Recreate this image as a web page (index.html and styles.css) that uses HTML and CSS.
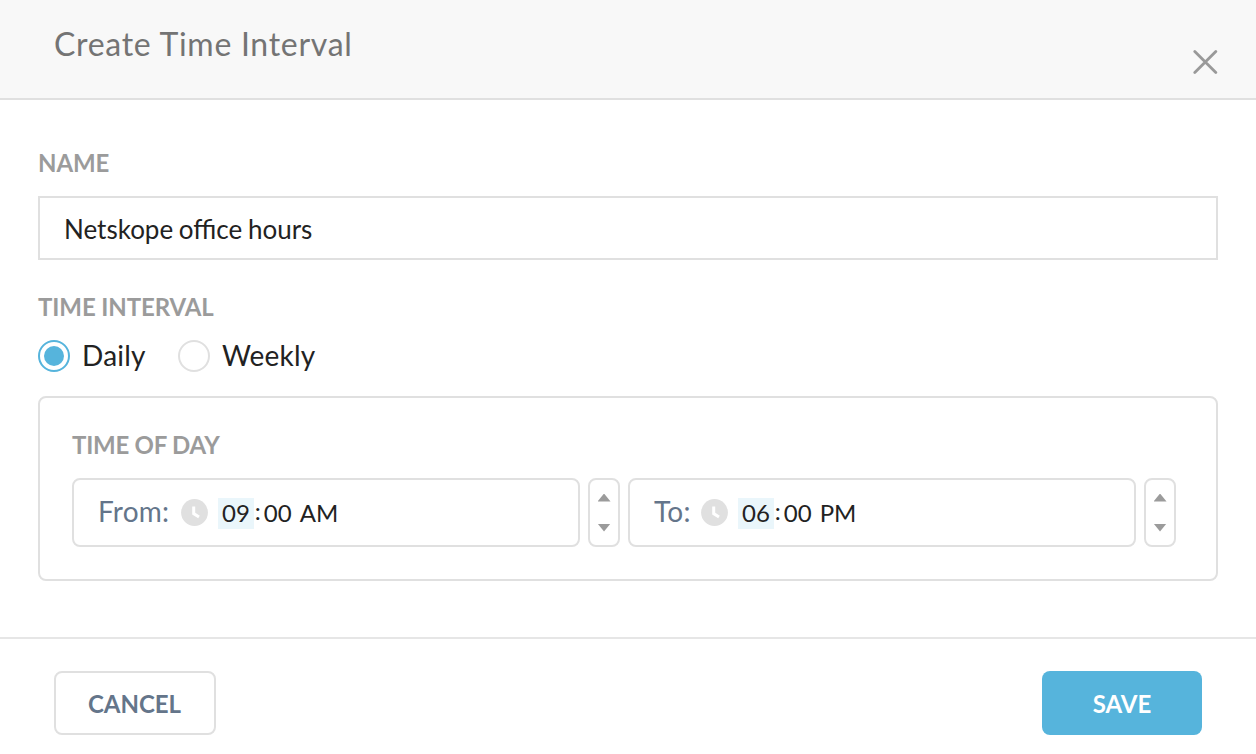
FILE: index.html
```html
<!DOCTYPE html>
<html lang="en">
<head>
    <meta charset="UTF-8">
    <meta name="viewport" content="width=device-width, initial-scale=1.0">
    <title>Create Time Interval</title>
    <link rel="stylesheet" href="styles.css">
</head>
<body>

    <!-- Header -->
    <div class="modal-header">
        <h2>Create Time Interval</h2>
        <svg class="close" width="25" height="24" viewBox="0 0 25 24">
            <path d="M1.8 1.5 L22.8 22.5 M22.8 1.5 L1.8 22.5"/>
        </svg>
    </div>

    <!-- Form -->
    <div class="modal-body">
        <div class="label">NAME</div>
        <input type="text" class="name-input" value="Netskope office hours">

        <div class="label interval-label">TIME INTERVAL</div>
        <div class="radios">
            <span class="radio checked"></span>
            <span class="radio-text daily">Daily</span>
            <span class="radio"></span>
            <span class="radio-text weekly">Weekly</span>
        </div>

        <div class="panel">
            <div class="label day-label">TIME OF DAY</div>
            <div class="times">
                <div class="time-field">
                    <span class="prefix from">From:</span>
                    <svg class="clock" width="27" height="27" viewBox="0 0 27 27">
                        <circle cx="13.5" cy="13.5" r="13.4"/>
                        <path d="M12.7 7.5 V14.6 L18 17.9"/>
                    </svg>
                    <span class="hour">09</span><span class="colon">:</span><span class="minute">00</span><span class="ampm">AM</span>
                </div>
                <div class="spinner">
                    <span class="up"></span>
                    <span class="down"></span>
                </div>
                <div class="time-field">
                    <span class="prefix to">To:</span>
                    <svg class="clock" width="27" height="27" viewBox="0 0 27 27">
                        <circle cx="13.5" cy="13.5" r="13.4"/>
                        <path d="M12.7 7.5 V14.6 L18 17.9"/>
                    </svg>
                    <span class="hour">06</span><span class="colon">:</span><span class="minute">00</span><span class="ampm">PM</span>
                </div>
                <div class="spinner">
                    <span class="up"></span>
                    <span class="down"></span>
                </div>
            </div>
        </div>
    </div>

    <!-- Footer -->
    <div class="modal-footer">
        <button class="cancel">CANCEL</button>
        <button class="save">SAVE</button>
    </div>

</body>
</html>
```
FILE: styles.css
```css
* {
    box-sizing: border-box;
}
body {
    font-family: Lato, sans-serif;
    margin: 0;
    background: white;
    color: #222;
}
.modal-header {
    display: flex;
    justify-content: space-between;
    height: 100px;
    padding: 24px 38px 0 54px;
    background: #f8f8f8;
    border-bottom: 2px solid #e0e0e0;
}
.modal-header h2 {
    margin: 0;
    font-size: 32px;
    font-weight: normal;
    line-height: 40px;
    letter-spacing: 0.72px;
    color: #747474;
}
.close {
    margin-top: 26px;
    fill: none;
    stroke: #999;
    stroke-width: 2.8;
    stroke-linecap: round;
}
.modal-body {
    height: 537px;
    padding: 49px 38px 0;
}
.label {
    font-size: 24px;
    font-weight: bold;
    line-height: 28px;
    letter-spacing: -0.1px;
    color: #9b9b9b;
}
.name-input {
    display: block;
    width: 100%;
    height: 64px;
    margin-top: 19px;
    padding: 1px 24px 0;
    border: 2px solid #e0e0e0;
    font-family: Lato, sans-serif;
    font-size: 26px;
    word-spacing: -1px;
    color: #222;
    outline: none;
}
.interval-label {
    margin-top: 33px;
}
.day-label {
    letter-spacing: -0.25px;
}
.radios {
    display: flex;
    align-items: center;
    height: 32px;
    margin-top: 19px;
}
.radio {
    display: flex;
    align-items: center;
    justify-content: center;
    width: 32px;
    height: 32px;
    border: 2px solid #e0e0e0;
    border-radius: 50%;
}
.radio.checked {
    border-color: #56b4dc;
}
.radio.checked::after {
    content: "";
    width: 20px;
    height: 20px;
    border-radius: 50%;
    background: #56b4dc;
}
.radio-text {
    margin: 0 0 2px 12px;
    font-size: 28px;
    line-height: 32px;
    letter-spacing: 0.2px;
}
.daily {
    width: 96px;
}
.panel {
    height: 185px;
    margin-top: 24px;
    padding: 33px 32px 0;
    border: 2px solid #e0e0e0;
    border-radius: 8px;
}
.times {
    display: flex;
    gap: 8px;
    margin-top: 19px;
}
.time-field {
    display: flex;
    align-items: center;
    width: 508px;
    height: 69px;
    padding: 0 24px;
    border: 2px solid #e0e0e0;
    border-radius: 8px;
    font-size: 24px;
    line-height: 29px;
}
.prefix {
    margin-bottom: 2px;
    font-size: 28px;
    letter-spacing: 0.2px;
    color: #64758a;
}
.from {
    width: 83px;
}
.to {
    width: 47px;
}
.clock {
    fill: #e0e0e0;
}
.clock path {
    fill: none;
    stroke: white;
    stroke-width: 3;
}
.hour {
    height: 31px;
    margin: 2px 0 0 10px;
    padding: 0 4px;
    background: #eaf6fb;
}
.colon {
    width: 10px;
    margin-bottom: 4px;
    padding-left: 1px;
}
.ampm {
    margin-left: 8px;
}
.spinner {
    display: flex;
    flex-direction: column;
    align-items: center;
    justify-content: center;
    gap: 22px;
    width: 32px;
    height: 69px;
    border: 2px solid #e0e0e0;
    border-radius: 8px;
}
.up,
.down {
    width: 13px;
    height: 8px;
    background: #9b9b9b;
}
.up {
    clip-path: polygon(50% 0, 100% 100%, 0 100%);
}
.down {
    clip-path: polygon(0 0, 100% 0, 50% 100%);
}
.modal-footer {
    display: flex;
    justify-content: space-between;
    height: 117px;
    padding: 32px 54px 0;
    border-top: 2px solid #e6e6e6;
}
button {
    height: 64px;
    padding: 0;
    border: none;
    border-radius: 8px;
    font-family: Lato, sans-serif;
    font-size: 24px;
    font-weight: bold;
    cursor: pointer;
}
.cancel {
    width: 162px;
    padding-right: 1px;
    background: white;
    border: 2px solid #e0e0e0;
    color: #64758a;
}
.save {
    width: 160px;
    background: #56b4dc;
    color: white;
}
```
